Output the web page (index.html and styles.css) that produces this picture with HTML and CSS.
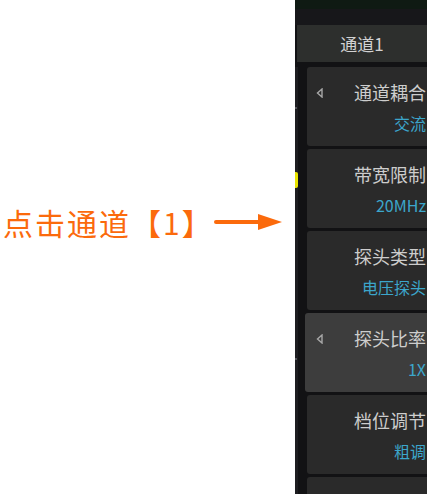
FILE: index.html
```html
<!DOCTYPE html>
<html lang="zh-CN">
<head>
    <meta charset="UTF-8">
    <meta name="viewport" content="width=device-width, initial-scale=1.0">
    <title>通道1</title>
    <link rel="stylesheet" href="styles.css">
</head>
<body>
<div class="note">
    <span class="note__text">点击通道【1】</span>
    <svg class="note__arrow" width="68" height="18" viewBox="0 0 68 18">
        <line x1="2" y1="9" x2="46" y2="9" stroke="#fb6a0c" stroke-width="4" stroke-linecap="round"/>
        <polygon points="44,1 68,9 44,17" fill="#fb6a0c"/>
    </svg>
</div>
<div class="panel">
    <div class="panel__strip"></div>
    <div class="panel__bar"></div>
    <div class="panel__title">通道1</div>
    <div class="panel__body">
        <div class="rail">
            <span class="rail__tick"></span>
            <span class="rail__mark"></span>
            <span class="rail__tick rail__tick_low"></span>
        </div>
        <div class="menu">
            <div class="menu__item">
                <svg class="menu__back" width="8" height="10" viewBox="0 0 8 10">
                    <polygon points="6,1 1.5,5 6,9" fill="none" stroke="#a8a8a8" stroke-width="1.4"/>
                </svg>
                <span class="menu__name">通道耦合</span>
                <span class="menu__value">交流</span>
            </div>
            <div class="menu__item">
                <span class="menu__name">带宽限制</span>
                <span class="menu__value">20MHz</span>
            </div>
            <div class="menu__item">
                <span class="menu__name">探头类型</span>
                <span class="menu__value">电压探头</span>
            </div>
            <div class="menu__item menu__item_active">
                <svg class="menu__back" width="8" height="10" viewBox="0 0 8 10">
                    <polygon points="6,1 1.5,5 6,9" fill="none" stroke="#a8a8a8" stroke-width="1.4"/>
                </svg>
                <span class="menu__name">探头比率</span>
                <span class="menu__value">1X</span>
            </div>
            <div class="menu__item">
                <span class="menu__name">档位调节</span>
                <span class="menu__value">粗调</span>
            </div>
            <div class="menu__item"></div>
        </div>
    </div>
</div>
</body>
</html>
```

FILE: styles.css
```css
body {
    margin: 0;
    width: 428px;
    height: 495px;
    display: flex;
    overflow: hidden;
    background: #fff;
    font-family: "Noto Sans CJK SC", "Noto Sans", sans-serif;
}

.note {
    width: 295px;
    height: 495px;
    flex: none;
    padding: 0 0 52px 3px;
    box-sizing: border-box;
    display: flex;
    align-items: center;
}
.note__text {
    font-size: 30px;
    line-height: 1;
    color: #fb6a0c;
    white-space: nowrap;
    letter-spacing: 2px;
}

.panel {
    width: 132px;
    height: 494px;
    flex: none;
    display: flex;
    flex-direction: column;
    background: #121214;
    overflow: hidden;
}
.panel__strip {
    height: 9px;
    flex: none;
    background: #0f1a13;
}
.panel__bar {
    height: 16px;
    flex: none;
    background: #17171a;
}
.panel__title {
    height: 37px;
    flex: none;
    margin-left: 2px;
    background: #2d2f2d;
    color: #d2d2d2;
    font-size: 17px;
    line-height: 37px;
    text-align: center;
}
.panel__body {
    flex: 1;
    min-height: 0;
    display: flex;
    padding-top: 5px;
}

.rail {
    width: 12px;
    flex: none;
    display: flex;
    flex-direction: column;
    border-left: 3px solid #1d1d20;
    box-sizing: border-box;
}
.rail__mark {
    width: 3px;
    height: 16px;
    margin: 63px 0 0 -3px;
    background: #e8e400;
    border-radius: 0 2px 2px 0;
}
.rail__tick {
    width: 2px;
    height: 2px;
    margin: 40px 0 0 -3px;
    background: #55555a;
}
.rail__tick_low {
    margin-top: 170px;
}

.menu {
    flex: 1;
    display: flex;
    flex-direction: column;
    gap: 3px;
}
.menu__item {
    height: 79px;
    flex: none;
    position: relative;
    display: flex;
    flex-direction: column;
    align-items: flex-end;
    padding-right: 1px;
    background: #2a2a2a;
    border-radius: 3px 0 0 3px;
}
.menu__item_active {
    margin-left: -2px;
    background: #3d3d3d;
}
.menu__name {
    margin-top: 13px;
    font-size: 18px;
    line-height: 24px;
    color: #cdcdcd;
    white-space: nowrap;
}
.menu__value {
    margin-top: 9px;
    font-size: 16px;
    line-height: 21px;
    color: #3ca6cb;
    white-space: nowrap;
}
.menu__back {
    position: absolute;
    left: 9px;
    top: 21px;
}
.menu__item_active .menu__back {
    left: 11px;
}
```
